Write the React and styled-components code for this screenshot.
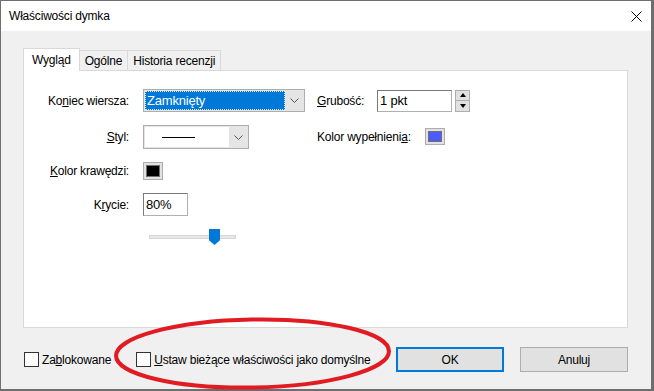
import React from "react";
import styled, { createGlobalStyle } from "styled-components";

const Global = createGlobalStyle`
  html, body { margin: 0; padding: 0; background: #6d6d6d; }
  body {
    font-family: "Liberation Sans", Arial, sans-serif;
    font-size: 12px;
    letter-spacing: -0.2px;
    color: #000;
  }
  * { box-sizing: border-box; }
`;

const Window = styled.div`
  position: relative;
  width: 652px;
  height: 390px;
  border: 1px solid #6f6f6f;
  background: #f0f0f0;
  display: flex;
  flex-direction: column;
`;

const TitleBar = styled.div`
  height: 30px;
  background: #fff;
  display: flex;
  align-items: center;
  justify-content: space-between;
  padding: 0 9px 0 8px;
`;

const Title = styled.span`
  font-size: 12px;
`;

const Body = styled.div`
  flex: 1;
  padding: 17px 23px 0 22px;
  display: flex;
  flex-direction: column;
`;

const Tabs = styled.div`
  display: flex;
  align-items: flex-end;
  height: 23px;
  position: relative;
  z-index: 1;
  margin-bottom: -1px;
`;

const Tab = styled.div`
  height: ${p => (p.active ? "23px" : "21px")};
  padding: 0 ${p => (p.active ? "8px" : "5px")};
  background: ${p => (p.active ? "#fff" : "#f0f0f0")};
  border: 1px solid #d9d9d9;
  border-bottom: ${p => (p.active ? "none" : "1px solid #d9d9d9")};
  margin-left: ${p => (p.first ? "0" : "-1px")};
  display: flex;
  align-items: center;
  white-space: nowrap;
`;

const Panel = styled.div`
  height: 258px;
  background: #fff;
  border: 1px solid #d9d9d9;
  display: flex;
  padding: 18px 0 0 0;
  gap: 12px;
`;

const LeftGrid = styled.div`
  display: grid;
  grid-template-columns: 105px 162px;
  grid-template-rows: 23px 24px 18px 23px 16px;
  row-gap: 13px;
  column-gap: 14px;
  align-items: center;
`;

const Label = styled.span`
  justify-self: end;
  white-space: nowrap;
`;

const RightCol = styled.div`
  display: flex;
  flex-direction: column;
  gap: 16px;
`;

const Row = styled.div`
  display: flex;
  align-items: center;
  height: ${p => p.h || "auto"};
  gap: ${p => p.gap || "0"};
`;

const RowLabel = styled.span`
  width: ${p => p.w || "auto"};
  white-space: nowrap;
`;

const Combo = styled.div`
  width: ${p => p.w};
  height: ${p => p.h};
  border: 1px solid #adadad;
  background: #e5e5e5;
  display: flex;
  align-items: stretch;
  padding: 1px;
`;

const ComboValue = styled.div`
  flex: 1;
  display: flex;
  align-items: center;
  padding-left: ${p => p.pad || "2px"};
  background: ${p => (p.selected ? "#0078d7" : "#fff")};
  color: ${p => (p.selected ? "#fff" : "#000")};
  outline: ${p => (p.selected ? "1px dotted #d8e8f8" : "none")};
  outline-offset: -1px;
  font-size: 13px;
`;

const Arrow = styled.div`
  width: 18px;
  display: flex;
  align-items: center;
  justify-content: center;
`;

const LineSample = styled.div`
  width: 33px;
  height: 1px;
  background: #000;
`;

const Swatch = styled.div`
  width: 20px;
  height: ${p => p.h || "18px"};
  border: 1px solid #adadad;
  background: #e1e1e1;
  padding: 2px;
`;

const SwatchFill = styled.div`
  width: 100%;
  height: 100%;
  background: ${p => p.color};
  border: 1px solid #707070;
`;

const TextInput = styled.div`
  width: ${p => p.w};
  height: ${p => p.h || "23px"};
  background: #fff;
  border: 1px solid #b0b0b0;
  border-top-color: #7a7a7a;
  border-left-color: #7a7a7a;
  padding-left: 2px;
  display: flex;
  align-items: center;
  font-size: 13px;
`;

const Spinner = styled.div`
  width: 15px;
  height: 22px;
  margin-left: 3px;
  display: flex;
  flex-direction: column;
  border: 1px solid #adadad;
  background: #e1e1e1;
`;

const SpinHalf = styled.div`
  flex: 1;
  display: flex;
  align-items: center;
  justify-content: center;
  border-top: ${p => (p.bottom ? "1px solid #adadad" : "none")};
  &::after {
    content: "";
    border-left: 3px solid transparent;
    border-right: 3px solid transparent;
    ${p => (p.bottom ? "border-top: 4px solid #000;" : "border-bottom: 4px solid #000;")}
  }
`;

const Slider = styled.div`
  position: relative;
  width: 87px;
  height: 16px;
  margin-left: 6px;
  display: flex;
  align-items: center;
`;

const Track = styled.div`
  width: 100%;
  height: 4px;
  background: #e7e7e7;
  border: 1px solid #d6d6d6;
`;

const Thumb = styled.div`
  position: absolute;
  left: 60px;
  top: 0;
  width: 11px;
  height: 16px;
  background: #0078d7;
  clip-path: polygon(0 0, 100% 0, 100% 70%, 50% 100%, 0 70%);
`;

const Footer = styled.div`
  display: flex;
  align-items: center;
  padding: 19px 0 0 1px;
`;

const Check = styled.label`
  display: flex;
  align-items: center;
  gap: 3px;
  margin-right: ${p => p.mr || "0"};
  white-space: nowrap;
  &::before {
    content: "";
    width: 13px;
    height: 13px;
    border: 1px solid #333;
    background: #fff;
  }
`;

const Button = styled.button`
  width: 108px;
  height: 25px;
  margin-left: ${p => p.ml || "0"};
  font: inherit;
  letter-spacing: inherit;
  color: #000;
  background: #e1e1e1;
  border: ${p => (p.primary ? "2px solid #0078d7" : "1px solid #adadad")};
  padding: 0;
`;

const U = styled.span`
  text-decoration: underline;
`;

const Mark = styled.svg`
  position: absolute;
  left: 108px;
  top: 311px;
  pointer-events: none;
`;

function Chevron() {
  return (
    <svg width="9" height="5" viewBox="0 0 9 5">
      <path d="M0.5 0.5 L4.5 4.5 L8.5 0.5" fill="none" stroke="#555" strokeWidth="1" />
    </svg>
  );
}

export default function App() {
  return (
    <>
      <Global />
      <Window>
        <TitleBar>
          <Title>Właściwości dymka</Title>
          <svg width="11" height="11" viewBox="0 0 11 11">
            <path d="M0.5 0.5 L10.5 10.5 M10.5 0.5 L0.5 10.5" stroke="#000" strokeWidth="1" />
          </svg>
        </TitleBar>
        <Body>
          <Tabs>
            <Tab active first>Wygląd</Tab>
            <Tab>Ogólne</Tab>
            <Tab>Historia recenzji</Tab>
          </Tabs>
          <Panel>
            <LeftGrid>
              <Label>Ko<U>n</U>iec wiersza:</Label>
              <Combo w="162px" h="23px">
                <ComboValue selected>Zamknięty</ComboValue>
                <Arrow><Chevron /></Arrow>
              </Combo>

              <Label><U>S</U>tyl:</Label>
              <Combo w="106px" h="24px">
                <ComboValue pad="17px"><LineSample /></ComboValue>
                <Arrow><Chevron /></Arrow>
              </Combo>

              <Label><U>K</U>olor krawędzi:</Label>
              <Swatch><SwatchFill color="#000" /></Swatch>

              <Label>K<U>r</U>ycie:</Label>
              <TextInput w="45px">80%</TextInput>

              <span />
              <Slider>
                <Track />
                <Thumb />
              </Slider>
            </LeftGrid>
            <RightCol>
              <Row h="23px">
                <RowLabel w="60px"><U>G</U>rubość:</RowLabel>
                <TextInput w="75px" h="22px">1 pkt</TextInput>
                <Spinner>
                  <SpinHalf />
                  <SpinHalf bottom />
                </Spinner>
              </Row>
              <Row gap="14px">
                <RowLabel>Kolor wypełnieni<U>a</U>:</RowLabel>
                <Swatch h="17px"><SwatchFill color="#4a5cff" /></Swatch>
              </Row>
            </RightCol>
          </Panel>
          <Footer>
            <Check mr="25px"><span>Za<U>b</U>lokowane</span></Check>
            <Check><span><U>U</U>staw bieżące właściwości jako domyślne</span></Check>
            <Button primary ml="auto">OK</Button>
            <Button ml="16px">Anuluj</Button>
          </Footer>
        </Body>
        <Mark width="290" height="80" viewBox="0 0 290 80">
          <ellipse cx="143.5" cy="41.5" rx="136.5" ry="34" fill="none" stroke="#e11b22" strokeWidth="4" transform="rotate(-1 143.5 41.5)" />
        </Mark>
      </Window>
    </>
  );
}
